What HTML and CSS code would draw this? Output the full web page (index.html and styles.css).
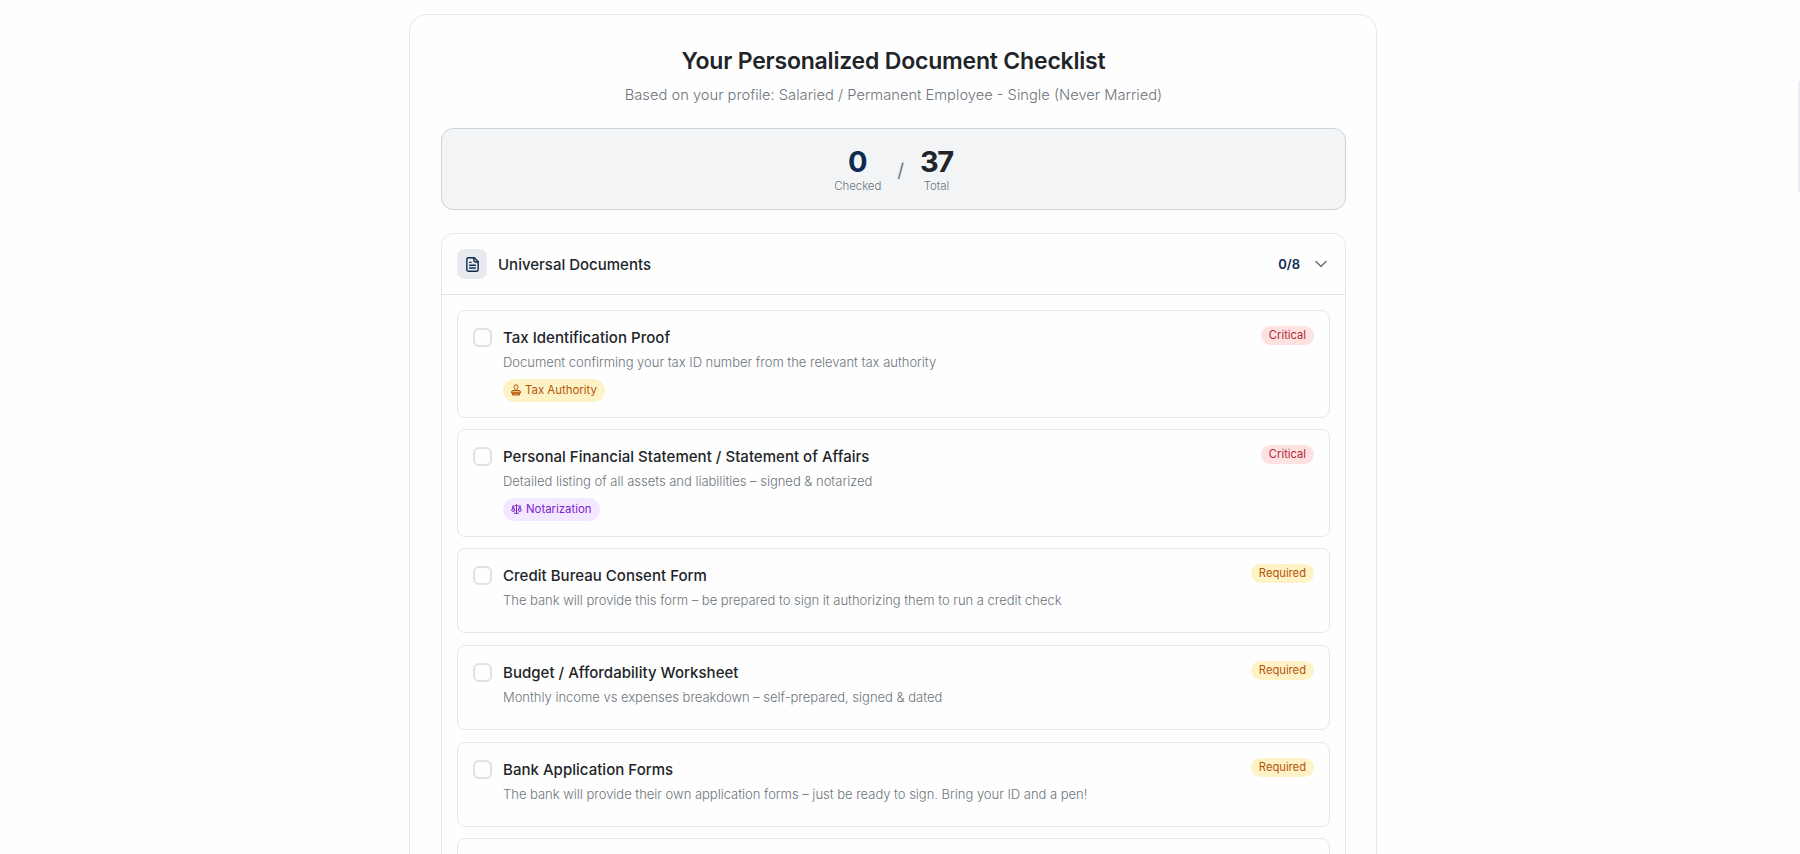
FILE: index.html
```html
<!DOCTYPE html>
<html lang="en">
<head>
    <meta charset="UTF-8">
    <meta name="viewport" content="width=device-width, initial-scale=1.0">
    <title>Your Personalized Document Checklist</title>
    <link rel="stylesheet" href="styles.css">
</head>
<body>
<main class="checklist-card">
    <header class="checklist-header">
        <h1>Your Personalized Document Checklist</h1>
        <p>Based on your profile: Salaried / Permanent Employee - Single (Never Married)</p>
    </header>

    <section class="progress-summary">
        <div class="stat">
            <span class="stat-number checked">0</span>
            <span class="stat-label">Checked</span>
        </div>
        <span class="stat-divider">/</span>
        <div class="stat">
            <span class="stat-number">37</span>
            <span class="stat-label">Total</span>
        </div>
    </section>

    <section class="category">
        <div class="category-header">
            <span class="category-icon">
                <svg width="17" height="17" viewBox="0 0 24 24" fill="none" stroke="currentColor" stroke-width="2" stroke-linecap="round" stroke-linejoin="round">
                    <path d="M14.500 2.500H6a2 2 0 0 0-2 2v15a2 2 0 0 0 2 2h12a2 2 0 0 0 2-2V8z"/>
                    <path d="M14 2.500V6.500a2 2 0 0 0 2 2h4M8 9h2M8 13h8M8 17h8"/>
                </svg>
            </span>
            <h2>Universal Documents</h2>
            <span class="category-count">0/8</span>
            <svg class="chevron" width="12" height="8" viewBox="0 0 12 8" fill="none" stroke="currentColor" stroke-width="1.5" stroke-linecap="round" stroke-linejoin="round">
                <path d="M1 1.500l5 5 5-5"/>
            </svg>
        </div>

        <div class="category-body">
            <article class="item">
                <span class="checkbox"></span>
                <div class="item-content">
                    <h3>Tax Identification Proof</h3>
                    <p>Document confirming your tax ID number from the relevant tax authority</p>
                    <div class="item-tags">
                        <span class="tag tag-stamp">
                            <svg width="10" height="12" viewBox="0 0 20 24" fill="none" stroke="currentColor" stroke-width="2" stroke-linejoin="round">
                                <path d="M8 13V9.500C6.500 8.500 6 7 6 5.500a4 4 0 0 1 8 0c0 1.500-.5 3-2 4V13"/>
                                <path d="M4 13h12a3 3 0 0 1 3 3v2H1v-2a3 3 0 0 1 3-3zM3 18h14v4H3z" fill="currentColor" fill-opacity=".35"/>
                            </svg>
                            Tax Authority
                        </span>
                    </div>
                </div>
                <span class="badge critical">Critical</span>
            </article>

            <article class="item">
                <span class="checkbox"></span>
                <div class="item-content">
                    <h3>Personal Financial Statement / Statement of Affairs</h3>
                    <p>Detailed listing of all assets and liabilities – signed &amp; notarized</p>
                    <div class="item-tags">
                        <span class="tag tag-notary">
                            <svg width="11" height="10" viewBox="0 0 22 20" fill="none" stroke="currentColor" stroke-width="2" stroke-linejoin="round">
                                <path d="M11 1v17M6 18.500h10M2 4.500c4 0 6-1 9-2.500 3 1.500 5 2.500 9 2.500"/>
                                <path d="M4.500 5L1.200 13c1.500 2.500 5 2.500 6.600 0zM17.500 5l-3.300 8c1.500 2.500 5 2.500 6.600 0z" fill="currentColor" fill-opacity=".3"/>
                            </svg>
                            Notarization
                        </span>
                    </div>
                </div>
                <span class="badge critical">Critical</span>
            </article>

            <article class="item">
                <span class="checkbox"></span>
                <div class="item-content">
                    <h3>Credit Bureau Consent Form</h3>
                    <p>The bank will provide this form – be prepared to sign it authorizing them to run a credit check</p>
                    <div class="item-tags"></div>
                </div>
                <span class="badge required">Required</span>
            </article>

            <article class="item">
                <span class="checkbox"></span>
                <div class="item-content">
                    <h3>Budget / Affordability Worksheet</h3>
                    <p>Monthly income vs expenses breakdown – self-prepared, signed &amp; dated</p>
                    <div class="item-tags"></div>
                </div>
                <span class="badge required">Required</span>
            </article>

            <article class="item">
                <span class="checkbox"></span>
                <div class="item-content">
                    <h3>Bank Application Forms</h3>
                    <p>The bank will provide their own application forms – just be ready to sign. Bring your ID and a pen!</p>
                    <div class="item-tags"></div>
                </div>
                <span class="badge required">Required</span>
            </article>

            <article class="item"></article>
        </div>
    </section>
</main>
<div class="scroll-thumb"></div>
</body>
</html>
```
FILE: styles.css
```css
* {
    box-sizing: border-box;
    margin: 0;
    padding: 0;
}
body {
    height: 100vh;
    overflow: hidden;
    padding: 14px 14px 0 0;
    background: #fefefe;
    color: #212529;
    font-family: Inter, "Liberation Sans", sans-serif;
}
.checklist-card {
    width: 968px;
    height: 840px;
    margin: 0 auto;
    padding: 30px 30px 0 31px;
    border: 1px solid #e5e8eb;
    border-bottom: none;
    border-radius: 18px 18px 0 0;
    overflow: hidden;
}
.checklist-header {
    text-align: center;
}
.checklist-header h1 {
    font-size: 23px;
    font-weight: 600;
    line-height: 32px;
    letter-spacing: -0.2px;
}
.checklist-header p {
    margin-top: 7px;
    font-size: 14.7px;
    font-weight: 300;
    line-height: 23px;
    color: #6c757d;
}

/* progress summary */
.progress-summary {
    display: flex;
    justify-content: center;
    align-items: center;
    gap: 16px;
    height: 82px;
    margin-top: 21px;
    padding-top: 3px;
    background: #f2f4f6;
    border: 1px solid #cdd3da;
    border-radius: 12px;
}
.stat {
    display: flex;
    flex-direction: column;
    align-items: center;
}
.stat-number {
    font-size: 29px;
    font-weight: 700;
    line-height: 30px;
    letter-spacing: -1.5px;
}
.stat-number.checked {
    color: #0d2b52;
    letter-spacing: 0;
}
.stat-label {
    font-size: 11.5px;
    line-height: 18px;
    font-weight: 300;
    letter-spacing: -0.1px;
    color: #6c757d;
}
.stat-divider {
    font-size: 19px;
    line-height: 24px;
    color: #6c757d;
}

/* category accordion */
.category {
    margin-top: 23px;
    border: 1px solid #e5e8eb;
    border-radius: 12px;
}
.category-header {
    display: flex;
    align-items: center;
    padding: 15px 18px 15px 15px;
    border-bottom: 1px solid #dfe3e6;
}
.category-icon {
    display: flex;
    align-items: center;
    justify-content: center;
    width: 30px;
    height: 30px;
    border-radius: 8px;
    background: #e6e9ee;
    color: #0d2b52;
}
.category-header h2 {
    flex: 1;
    margin-left: 11px;
    font-size: 15px;
    font-weight: 500;
}
.category-count {
    font-size: 13px;
    font-weight: 600;
    color: #0d2b52;
}
.chevron {
    margin-left: 15px;
    color: #6c757d;
}
.category-body {
    display: flex;
    flex-direction: column;
    gap: 11.6px;
    padding: 15px;
}

/* checklist items */
.item {
    display: flex;
    align-items: flex-start;
    min-height: 85px;
    padding: 15px;
    border: 1px solid #e3e7ea;
    border-radius: 8px;
}
.checkbox {
    flex: none;
    width: 19px;
    height: 19px;
    margin-top: 2px;
    border: 2px solid #dee2e6;
    border-radius: 6px;
}
.item-content {
    flex: 1;
    margin-left: 11px;
}
.item-content h3 {
    font-size: 15px;
    font-weight: 500;
    line-height: 24px;
    letter-spacing: 0.03px;
}
.item-content p {
    margin-top: 2px;
    font-size: 13px;
    font-weight: 300;
    line-height: 21px;
    letter-spacing: -0.02px;
    color: #6c757d;
}
.item-tags {
    display: flex;
    margin-top: 6px;
}
.tag {
    display: flex;
    align-items: center;
    gap: 4px;
    height: 22.6px;
    padding: 0 8px;
    border-radius: 12px;
    font-size: 11.4px;
}
.tag-stamp {
    background: #fef3c7;
    color: #b45309;
}
.tag-notary {
    background: #f3e8ff;
    color: #7e22ce;
}
.badge {
    padding: 0 8px;
    border-radius: 10px;
    font-size: 11.2px;
    line-height: 19px;
}
.critical {
    background: #fee2e2;
    color: #b02a37;
}
.required {
    background: #fef3c7;
    color: #b45309;
}

.scroll-thumb {
    position: fixed;
    top: 81px;
    right: 0;
    width: 2px;
    height: 111px;
    background: #ececf2;
}
```
